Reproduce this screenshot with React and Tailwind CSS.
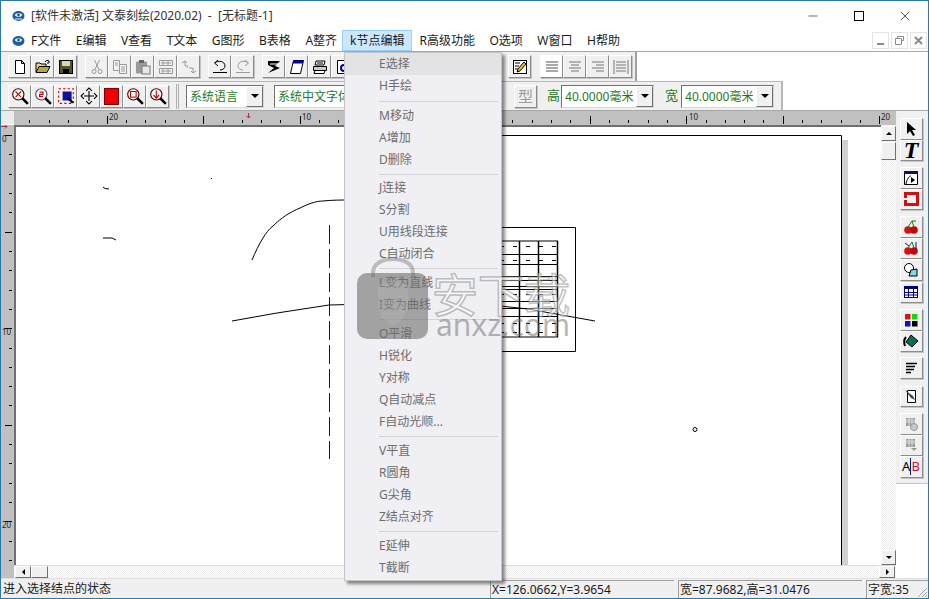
import { Minus, X } from 'lucide-react';

const font = { fontFamily: '"Noto Sans", "Noto Sans CJK SC", sans-serif' };

function I({ children, size = 16 }) {
  return (
    <svg width={size} height={size} viewBox="0 0 16 16" fill="none" className="block">
      {children}
    </svg>
  );
}

function Tb({ children, className = '' }) {
  return (
    <div className={`w-[23px] h-[23px] shrink-0 flex items-center justify-center bg-[#f0f0f0] border border-t-white border-l-white border-r-[#8c8c8c] border-b-[#8c8c8c] shadow-[1px_1px_0_#c4c4c4] ${className}`}>
      {children}
    </div>
  );
}

function Mag({ color = '#400000', children }) {
  return (
    <I size={18}>
      <circle cx="6.5" cy="6.5" r="5" stroke={color} fill="#fff" />
      <path d="M10 10l5 5" stroke="#000" strokeWidth="2.2" />
      {children}
    </I>
  );
}

const gray = '#9a9a9a';

const row1 = [
  { ml: '', icon: <I><path d="M3.5 1.5h6l3 3v10h-9z M9.5 1.5v3h3" stroke="#000" fill="#fff" /></I> },
  { ml: '', icon: <I><path d="M1 13V4h4l1 1h5v2" stroke="#000" fill="#e8d88a" /><path d="M1 13.5l3-6h11l-3 6z" fill="#b5a645" stroke="#000" /><path d="M10 3c1-2 3-2 4-1M14 2v2h-2" stroke="#000" /></I> },
  { ml: '', icon: <I><rect x="1.5" y="1.5" width="13" height="13" fill="#55551c" stroke="#000" /><rect x="4" y="2" width="8" height="5" fill="#d8d8c0" /><rect x="5" y="10" width="6" height="4" fill="#000" /></I> },
  { ml: 'ml-[8px]', icon: <I><circle cx="5" cy="12.5" r="2" stroke={gray} /><circle cx="11" cy="12.5" r="2" stroke={gray} /><path d="M6 10.5L10.5 1M10 10.5L5.5 1" stroke={gray} /></I> },
  { ml: '', icon: <I><path d="M1.5 1.5h6v10h-6z" stroke={gray} fill="#f4f4f4" /><path d="M7.5 5.5h7v9h-7z" stroke={gray} fill="#f4f4f4" /><path d="M3 4h3M3 6h3M9 8h4M9 10h4M9 12h4" stroke={gray} /></I> },
  { ml: '', icon: <I><rect x="1" y="2.5" width="11" height="12" rx="1" fill={gray} /><rect x="4" y="1" width="5" height="3" fill="#666" /><rect x="7" y="7" width="8" height="8" fill="#e8e8e8" stroke="#777" /></I> },
  { ml: '', icon: <I><path d="M1.5 1.5h13v5h-13zM1.5 9.5h13v5h-13zM5 1.5v5M10 1.5v5M5 9.5v5M10 9.5v5" stroke={gray} /><path d="M3 4h10M3 12h10" stroke={gray} /></I> },
  { ml: '', icon: <I><path d="M1 4l3-2 2 2M4 2v5h3M15 12l-3 2-2-2M12 14V9H9" stroke={gray} /><path d="M6 8l3 1" stroke={gray} strokeDasharray="1 1" /></I> },
  { ml: 'ml-[8px]', icon: <I><path d="M1 13.5h14" stroke="#000" /><path d="M3 4c3-3 10-2 10 3 0 2-2 4-5 4" stroke="#000" /><path d="M6 1L2.5 4 6 7" stroke="#000" /></I> },
  { ml: '', icon: <I><path d="M1 13.5h14" stroke={gray} /><path d="M13 4C10 1 3 2 3 7c0 2 2 4 5 4" stroke={gray} /><path d="M10 1l3.5 3L10 7" stroke={gray} /></I> },
  { ml: 'ml-[8px]', icon: <I><path d="M2 2h12l-5 5 5 2-12 5 6-5-6-3z" fill="#000" /><path d="M4 5l9 0" stroke="#fff" /></I> },
  { ml: '', icon: <I><path d="M4.5 1.5h10l-3 13h-10z" fill="#fff" stroke="#000" /><path d="M4.5 1.5h10l-.7 3h-10z" fill="#0000a8" /></I> },
  { ml: '', icon: <I><path d="M4 2h9l-1 4H3z" fill="#fff" stroke="#000" /><path d="M1.5 7.5h13v4h-13z" fill="#ccc" stroke="#000" /><path d="M3 11.5h10l-1 3H2z" fill="#fff" stroke="#000" /><path d="M5 4h6" stroke="#000" /></I> },
  { ml: '', icon: <I><path d="M2.5 1.5h11v13h-11z" fill="#fff" stroke="#000" /><circle cx="9" cy="9" r="3" stroke="#00a" strokeWidth="2" /></I> },
  { ml: 'ml-[154px]', icon: <I><rect x="1.5" y="1.5" width="13" height="13" fill="#fff" stroke="#000" /><path d="M3 4h5M3 7h4M3 10h3" stroke="#000" /><path d="M12 3l2 2-6 7-3 1 1-3z" fill="#e8c020" stroke="#000" /></I> },
];

const alignLines = [
  'M2 3h12M2 6h12M2 9h12M2 12h12',
  'M2 3h12M4 6h8M2 9h12M4 12h8',
  'M2 3h12M6 6h8M2 9h12M6 12h8',
  'M1 1v14M15 1v14M3 3h10M3 6h10M3 9h10M3 12h10',
];

const row2 = [
  <Mag><path d="M4 4l5 5M9 4l-5 5" stroke="#c00" /></Mag>,
  <Mag color="#604060"><path d="M5 4.5h3v2H5v2h3" stroke="#c00" /></Mag>,
  <I size={18}><rect x="1.5" y="1.5" width="13" height="13" stroke="#c00" strokeDasharray="2 2" /><rect x="5" y="4" width="8" height="8" fill="#1010a0" /><path d="M10 10l4 4" stroke="#000" strokeWidth="2" /></I>,
  <I size={18}><path d="M8 1v14M1 8h14" stroke="#000" /><path d="M5.5 3.5L8 1l2.5 2.5M5.5 12.5L8 15l2.5-2.5M3.5 5.5L1 8l2.5 2.5M12.5 5.5L15 8l-2.5 2.5" stroke="#000" fill="#fff" /></I>,
  <div className="w-[15px] h-[17px] bg-[#f00000] border border-[#800000]" />,
  <Mag><rect x="4" y="4" width="5" height="5" stroke="#c00" /></Mag>,
  <Mag><path d="M6.5 3v7M4 7l2.5 3L9 7" stroke="#c00" /></Mag>,
];

const rightTools = [
  { mt: '', icon: <I><path d="M4 1v12l3-3 3 5 2-1-3-5h4z" fill="#000" /></I> },
  { mt: '', icon: <span className="text-[24px] leading-none font-bold italic text-black" style={{ fontFamily: '"Liberation Serif", serif' }}>T</span> },
  { mt: 'mt-[6px]', icon: <I><path d="M1.5 1.5h13v13h-13z" fill="#fff" stroke="#000" /><path d="M1 1h14v3H1z" fill="#101060" /><path d="M3 14c1-5 3-8 5-8" stroke="#000" /><path d="M8 7l4 3-4 3z" fill="#000" /></I> },
  { mt: '', icon: <div className="w-[15px] h-[14px] border-[3px] border-[#d01010] relative"><div className="absolute left-[-3px] top-[3px] w-[6px] h-[2px] bg-white" /></div> },
  { mt: 'mt-[6px]', icon: <I><circle cx="5" cy="11" r="3.8" fill="#d81010" /><circle cx="11" cy="11" r="3.8" fill="#c00808" /><path d="M5 8l4-6 2 6" stroke="#108010" /><path d="M9 2h4" stroke="#108010" /></I> },
  { mt: '', icon: <I><circle cx="5" cy="11" r="3.8" fill="#d81010" /><circle cx="11" cy="11" r="3.8" fill="#c00808" /><path d="M5 8l4-6 2 6" stroke="#108010" /><path d="M13 2v7M2 3l4 3" stroke="#1010a0" /></I> },
  { mt: '', icon: <I><circle cx="6" cy="6" r="4.5" fill="#fff" stroke="#000" /><path d="M8 8l6-1v7H6z" fill="#80d8e0" stroke="#000" /></I> },
  { mt: 'mt-[1px]', icon: <I><rect x="1.5" y="2.5" width="13" height="11" fill="#fff" stroke="#000080" /><path d="M1 2h14v3H1z" fill="#000080" /><path d="M1.5 8.5h13M1.5 11h13M5.5 4v10M10.5 4v10" stroke="#000080" /></I> },
  { mt: 'mt-[6px]', icon: <I><rect x="2" y="2" width="5.5" height="5.5" fill="#e01010" /><rect x="9" y="2" width="5.5" height="5.5" fill="#10d810" /><rect x="2" y="9" width="5.5" height="5.5" fill="#1010b0" /><rect x="9" y="9" width="5.5" height="5.5" fill="#000" /></I> },
  { mt: '', icon: <I><path d="M8 2l7 6-6 6-6-5z" fill="#0b6b5a" stroke="#000" /><path d="M3 4C1 6 1 10 2 13" stroke="#000" strokeWidth="2" /></I> },
  { mt: 'mt-[5px]', icon: <I><path d="M3 3.5h11M3 6.5h9M3 9.5h8M3 12.5h5" stroke="#000" strokeWidth="1.5" /></I> },
  { mt: 'mt-[7px]', icon: <I><path d="M4.5 2.5h8v12h-8z" fill="#fff" stroke="#000" /><path d="M2 2l8 6 2 4-4-2z" fill="#444" /></I> },
  { mt: 'mt-[6px]', icon: <I><path d="M3 2h9v8H3z" fill={gray} /><path d="M3 4h9M3 6h9M6 2v8M9 2v8" stroke="#ddd" /><circle cx="11" cy="11" r="3.5" fill="#c8c8c8" stroke={gray} /></I> },
  { mt: '', icon: <I><path d="M3 2h9v8H3z" fill={gray} /><path d="M3 4h9M3 6h9M6 2v8M9 2v8" stroke="#ddd" /><path d="M8 11l3 3 3-3z" fill={gray} /></I> },
  { mt: '', icon: <span className="flex items-center text-[13px] leading-none"><span className="text-black">A</span><span className="w-px h-[17px] bg-[#101090]" /><span className="text-[#d01030]">B</span></span> },
];

const topMenu = ['F文件', 'E编辑', 'V查看', 'T文本', 'G图形', 'B表格', 'A整齐'];
const topMenu2 = ['R高级功能', 'O选项', 'W窗口', 'H帮助'];

const nodeMenu = [
  'E选择', 'H手绘', 'h-[8px]',
  'M移动', 'A增加', 'D删除', 'h-[6px]',
  'J连接', 'S分割', 'U用线段连接', 'C自动闭合', 'h-[7px]',
  'L变为直线', 'I变为曲线', 'h-[7px]',
  'O平滑', 'H锐化', 'Y对称', 'Q自动减点', 'F自动光顺...', 'h-[7px]',
  'V平直', 'R圆角', 'G尖角', 'Z结点对齐', 'h-[7px]',
  'E延伸', 'T截断',
];

function Combo({ text, w }) {
  return (
    <div className={`h-[23px] flex bg-white border border-t-[#707070] border-l-[#707070] border-r-[#d8d8d8] border-b-[#d8d8d8] ${w}`}>
      <span className="flex-1 pl-[3px] overflow-hidden whitespace-nowrap text-[12px] leading-[22px] text-[#1f7a1f]">{text}</span>
      <Arrow />
    </div>
  );
}

function Arrow() {
  return (
    <div className="w-[17px] shrink-0 flex items-center justify-center bg-[#f0f0f0] border border-t-white border-l-white border-r-[#707070] border-b-[#707070]">
      <div className="w-0 h-0 border-x-[4px] border-x-transparent border-t-[4px] border-t-black" />
    </div>
  );
}

function ScrollBtn({ dir, className = '' }) {
  const tri = {
    up: 'border-x-[3px] border-x-transparent border-b-[3px] border-b-black',
    down: 'border-x-[3px] border-x-transparent border-t-[3px] border-t-black',
    left: 'border-y-[3px] border-y-transparent border-r-[3px] border-r-black',
    right: 'border-y-[3px] border-y-transparent border-l-[3px] border-l-black',
  }[dir];
  return (
    <div className={`flex items-center justify-center bg-[#f0f0f0] border border-t-white border-l-white border-r-[#707070] border-b-[#707070] ${className}`}>
      {tri && <div className={`w-0 h-0 ${tri}`} />}
    </div>
  );
}

const track = 'bg-[repeating-conic-gradient(#ffffff_0_25%,#ececec_0_50%)] bg-[length:2px_2px]';

function TopRuler() {
  const ticks = [];
  for (let k = -25; k <= 20; k++) {
    const x = 493 + k * 19.32;
    if (x < 15 || x > 895) continue;
    const long = k % 5 === 0;
    ticks.push(<rect key={k} x={Math.round(x)} y={long ? 115 : 119} width="1" height={long ? 8 : 3} fill="#000" />);
  }
  return (
    <svg width="882" height="14" viewBox="14 110 882 14" className="block">
      {ticks}
      <text x="109" y="119" fontSize="8" fill="#222">20</text>
      <text x="302" y="119" fontSize="8" fill="#222">10</text>
      <text x="689" y="119" fontSize="8" fill="#222">10</text>
      <text x="881" y="119" fontSize="8" fill="#222">20</text>
      <path d="M248.5 112v5M246.5 115l2 2 2-2" stroke="#b03040" fill="none" />
    </svg>
  );
}

function LeftRuler() {
  const ticks = [];
  for (let k = 0; k <= 22; k++) {
    const y = 134 + k * 19.32;
    const long = k % 5 === 0;
    ticks.push(<rect key={k} x={long ? 5 : 9} y={Math.round(y)} width={long ? 7 : 3} height="1" fill="#000" />);
  }
  return (
    <svg width="13" height="454" viewBox="1 124 13 454" className="block">
      {ticks}
      <text x="2" y="141" fontSize="8" fill="#222">0</text>
      <text x="2" y="334" fontSize="8" fill="#222">10</text>
      <text x="2" y="527" fontSize="8" fill="#222">20</text>
      <path d="M1 125.5h6M5 123.5l2 2-2 2" stroke="#b03040" fill="none" />
    </svg>
  );
}

function Drawing() {
  const cols = [500, 519, 538, 557];
  const solid = [253, 263, 275, 279, 285, 288, 300, 307, 315];
  const dashed = [245, 259, 293, 322, 331];
  return (
    <svg width="865" height="438" viewBox="16 126 865 438" fill="none" className="block">
      <path d="M480 134.5h361.5V564" stroke="#000" />
      <rect x="842" y="139" width="6" height="425" fill="#d0d0d0" />
      <path d="M103 186l2 1.500 4 .5M103 237h9l4 2" stroke="#000" />
      <rect x="211" y="177" width="1" height="1" fill="#000" />
      <path d="M252 259c3-7 7-16 11-22 3-5 6-9 10-12 8-8 17-14 27-18 8-4 16-7 23-7 9-1 18-1 27-1" stroke="#000" />
      <path d="M232 320l45-8 52-8 40-1" stroke="#000" />
      <path d="M329.500 224v234" stroke="#101060" strokeDasharray="19 5" />
      <path d="M480 226.500h95.500v124H480" stroke="#000" />
      <rect x="500" y="240" width="57.500" height="96" stroke="#000" />
      {cols.map(x => <path key={x} d={`M${x}.5 240v96`} stroke="#000" strokeWidth="1.500" />)}
      {solid.map(y => <path key={y} d={`M500 ${y}.5h57`} stroke="#000" />)}
      {dashed.map(y => <path key={y} d={`M500 ${y}.5h57`} stroke="#000" strokeDasharray="4 9" />)}
      <path d="M500 305l28 3 67 12" stroke="#000" />
      <ellipse cx="695" cy="428.500" rx="2" ry="2" stroke="#000" fill="#fff" />
    </svg>
  );
}

export default function App() {
  return (
    <div className="relative w-[929px] h-[599px] overflow-hidden bg-white border border-[#2b78ac] flex flex-col text-[12px] text-[#1a1a1a]" style={font}>
      {/* title bar */}
      <div className="h-[29px] shrink-0 flex items-center pl-[11px]">
        <svg width="13" height="12" viewBox="0 0 13 12" className="block">
          <ellipse cx="6.500" cy="6" rx="6" ry="5" fill="#1c5f9c" />
          <ellipse cx="6.500" cy="5" rx="3.500" ry="1.800" fill="#e8f2fa" />
          <circle cx="6.500" cy="5" r="1.200" fill="#123f6e" />
          <path d="M3 9h7" stroke="#e8f2fa" />
        </svg>
        <span className="ml-[6px] text-[#333333] whitespace-pre">{'[软件未激活] 文泰刻绘(2020.02)  -  [无标题-1]'}</span>
        <div className="ml-auto flex">
          <div className="w-[46px] h-[29px] flex items-center justify-center"><Minus size={14} strokeWidth={1} color="#000" /></div>
          <div className="w-[46px] h-[29px] flex items-center justify-center"><div className="w-[10px] h-[10px] border border-black" /></div>
          <div className="w-[46px] h-[29px] flex items-center justify-center"><X size={16} strokeWidth={1} color="#000" /></div>
        </div>
      </div>

      {/* menu bar */}
      <div className="h-[22px] shrink-0 flex items-center border-b border-[#a8a8a8] pl-[11px] relative">
        <svg width="13" height="12" viewBox="0 0 13 12" className="block">
          <ellipse cx="6.500" cy="6" rx="6" ry="5" fill="#1c5f9c" />
          <ellipse cx="6.500" cy="5" rx="3.500" ry="1.800" fill="#e8f2fa" />
          <circle cx="6.500" cy="5" r="1.200" fill="#123f6e" />
        </svg>
        <div className="ml-[6px] flex items-center gap-[14.500px] whitespace-nowrap">
          {topMenu.map(m => <span key={m}>{m}</span>)}
        </div>
        <div className="ml-[5px] h-[21px] px-[7px] flex items-center bg-[#cce8ff] border border-[#99d1ff] whitespace-nowrap">k节点编辑</div>
        <div className="ml-[7px] flex items-center gap-[14.500px] whitespace-nowrap">
          {topMenu2.map(m => <span key={m}>{m}</span>)}
        </div>
        <div className="ml-auto mr-[1px] flex gap-[2px]">
          <div className="w-[17px] h-[17px] flex items-end justify-center pb-[3px] border border-[#e4e4e4]"><div className="w-[7px] h-[2px] bg-[#8a8a8a]" /></div>
          <div className="w-[17px] h-[17px] flex items-center justify-center border border-[#e4e4e4]">
            <svg width="9" height="9" viewBox="0 0 9 9" fill="none"><path d="M2.500 2.500V.5h6v4h-2M.5 2.500h6v6h-6z" stroke="#8a8a8a" /></svg>
          </div>
          <div className="w-[17px] h-[17px] flex items-center justify-center border border-[#e4e4e4]">
            <svg width="9" height="9" viewBox="0 0 9 9" fill="none"><path d="M1 1l7 7M8 1L1 8" stroke="#8a8a8a" strokeWidth="2" /></svg>
          </div>
        </div>
      </div>

      {/* toolbar 1 */}
      <div className="h-[29px] shrink-0 w-[636px] flex items-center pl-[7px] bg-[#f0f0f0] border-r-2 border-[#a0a0a0]">
        {row1.map((b, i) => <Tb key={i} className={b.ml}>{b.icon}</Tb>)}
        <div className="flex ml-[9px]">
          {alignLines.map((d, i) => (
            <Tb key={d} className={i === 0 ? 'bg-white' : ''}>
              <I><path d={d} stroke={i === 0 ? '#555' : '#777'} /></I>
            </Tb>
          ))}
        </div>
      </div>

      {/* toolbar 2 */}
      <div className="h-[29px] shrink-0 w-[782px] flex items-center pl-[7px] bg-[#f0f0f0] border-t border-r-2 border-[#b8b8b8]">
        {row2.map((ic, i) => <Tb key={i}>{ic}</Tb>)}
        <div className="ml-[7px] w-[3px] h-[25px] border-x border-[#b0b0b0]" />
        <div className="ml-[7px]"><Combo text="系统语言" w="w-[78px]" /></div>
        <div className="ml-[10px]"><Combo text="系统中文字体" w="w-[120px]" /></div>
        <Tb className="ml-[120px] text-[15px] text-[#9a9a9a]">型</Tb>
        <span className="ml-[10px] text-[#1f7a1f] text-[13px]">高</span>
        <div className="ml-[1px]"><Combo text="40.0000毫米" w="w-[93px]" /></div>
        <span className="ml-[11px] text-[#1f7a1f] text-[13px]">宽</span>
        <div className="ml-[3px]"><Combo text="40.0000毫米" w="w-[93px]" /></div>
      </div>

      {/* workspace */}
      <div className="flex-1 min-h-0 flex border-t border-[#a8a8a8]">
        <div className="w-[895px] shrink-0 flex flex-col">
          <div className="h-[14px] shrink-0 flex">
            <div className="w-[13px] shrink-0 bg-[#ececec] border-b border-white" />
            <div className="w-[882px] bg-[#c0c0c0]"><TopRuler /></div>
          </div>
          <div className="flex-1 min-h-0 flex">
            <div className="w-[13px] shrink-0 bg-[#c0c0c0]"><LeftRuler /></div>
            <div className="w-[882px] flex flex-col">
              <div className="flex h-[440px] shrink-0">
                <div className="w-[867px] shrink-0 overflow-hidden bg-white border-t-2 border-l-2 border-[#707070]"><Drawing /></div>
                <div className={`w-[15px] flex flex-col ${track}`}>
                  <ScrollBtn dir="up" className="h-[15px] shrink-0 mt-[1px]" />
                  <ScrollBtn className="h-[18px] shrink-0 mt-[1px]" />
                  <div className="flex-1" />
                  <ScrollBtn dir="down" className="h-[15px] shrink-0" />
                </div>
              </div>
              <div className={`flex-1 flex items-center justify-between pr-[1px] pl-[1px] border-t border-[#dcdcdc] ${track}`}>
                <div className="flex">
                  <ScrollBtn dir="left" className="w-[16px] h-[12px]" />
                  <ScrollBtn className="w-[17px] h-[12px]" />
                </div>
                <ScrollBtn dir="right" className="w-[16px] h-[12px]" />
              </div>
            </div>
          </div>
        </div>
        <div className="w-[32px] shrink-0 flex flex-col">
          <div className="h-[373px] shrink-0 bg-[#f0f0f0] border-b border-[#c8c8c8] flex flex-col items-center pt-[7px] pr-[2px]">
            {rightTools.map((t, i) => (
              <Tb key={i} className={`!h-[21.500px] ${t.mt}`}>{t.icon}</Tb>
            ))}
          </div>
        </div>
      </div>

      {/* status bar */}
      <div className="h-[20px] shrink-0 flex items-center bg-[#f0f0f0] border-t border-[#e0e0e0] whitespace-nowrap">
        <div className="w-[489px] shrink-0 pl-[2px]">进入选择结点的状态</div>
        <div className="w-[184px] shrink-0 h-[18px] pl-[1px] leading-[17px] border-t border-l border-[#a0a0a0]">X=126.0662,Y=3.9654</div>
        <div className="ml-[4px] w-[184px] shrink-0 h-[18px] pl-[1px] leading-[17px] border-t border-l border-[#a0a0a0]">宽=87.9682,高=31.0476</div>
        <div className="ml-[4px] flex-1 h-[18px] pl-[1px] leading-[17px] border-t border-l border-[#a0a0a0] relative">
          字宽:35
          <svg width="12" height="12" viewBox="0 0 12 12" className="absolute right-0 bottom-0">
            <path d="M11 2L2 11M11 6l-5 5M11 9l-2 2" stroke="#a8a8a8" />
          </svg>
        </div>
      </div>

      {/* open dropdown */}
      <div className="absolute left-[343px] top-[51px] w-[158px] h-[529px] bg-[#f0eff3] border border-[#c4c4c4] shadow-[3px_3px_3px_rgba(0,0,0,0.45)]">
        {nodeMenu.map((m, i) =>
          m.startsWith('h-[') ? (
            <div key={i} className={`${m} flex items-center pl-[34px] pr-[3px]`}>
              <div className="w-full h-px bg-[#d4d3d6]" />
            </div>
          ) : (
            <div key={i} className={`h-[22px] pl-[34px] leading-[22px] text-[#6d6d6d] whitespace-nowrap ${i === 0 ? 'bg-[#e3e2e5]' : ''}`}>{m}</div>
          )
        )}
      </div>

      {/* site watermark */}
      <div className="absolute left-[355px] top-[256px] w-[220px] h-[95px] pointer-events-none">
        <svg width="74" height="84" viewBox="0 0 74 84" className="absolute left-0 top-0">
          <path d="M17 20V16C17 6 27 2 37 2s20 4 20 14v4" stroke="rgba(110,110,110,0.4)" strokeWidth="4" fill="none" />
          <rect x="1" y="16" width="71" height="66" rx="10" fill="rgba(110,110,110,0.6)" />
          <path d="M22 28l15-5 15 5v20c0 10-8 17-15 21-7-4-15-11-15-21z" fill="rgba(200,200,200,0.2)" />
        </svg>
        <span className="absolute left-[76px] top-[7px] text-[46px] leading-[60px] whitespace-nowrap text-[rgba(255,255,255,0.5)] [-webkit-text-stroke:1.500px_rgba(130,130,130,0.5)]">安下载</span>
        <span className="absolute left-[80px] top-[46px] text-[30px] leading-[44px] whitespace-nowrap text-[rgba(110,110,110,0.5)]">anxz.com</span>
      </div>
    </div>
  );
}
